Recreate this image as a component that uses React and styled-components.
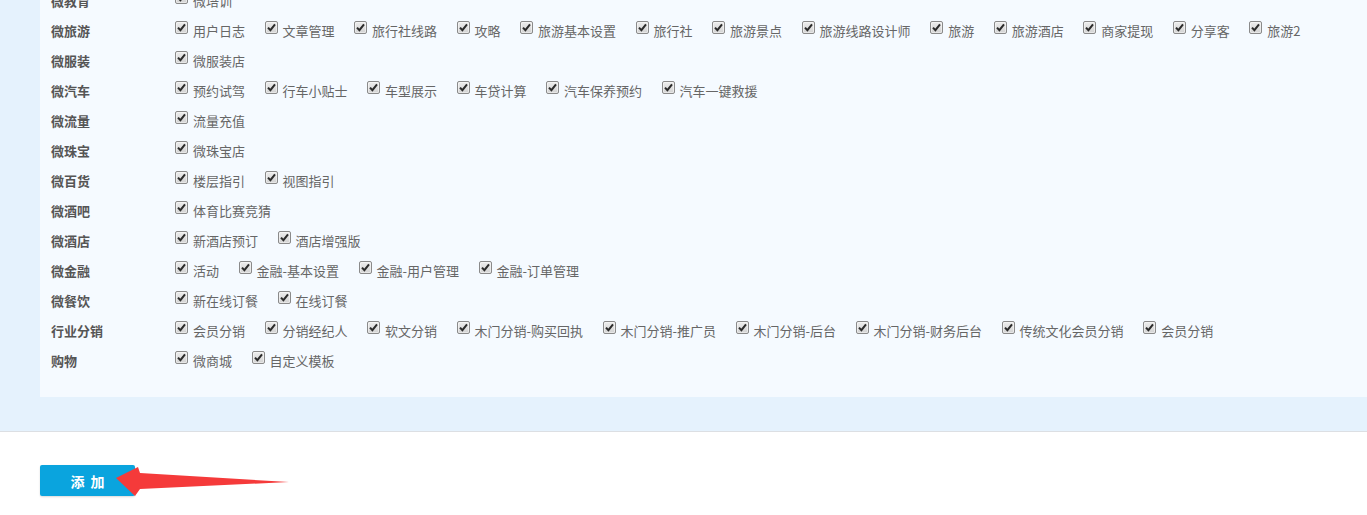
import React from 'react'
import styled, { createGlobalStyle } from 'styled-components'

const GlobalStyle = createGlobalStyle`
  html, body {
    margin: 0;
    padding: 0;
    background: #fff;
    overflow: hidden;
  }
  body {
    font-family: "Noto Sans CJK SC", "Liberation Sans", sans-serif;
    font-size: 13px;
    color: #666;
  }
`

const StyledPage = styled.div`
  position: relative;
  width: 1367px;
  height: 515px;
  overflow: hidden;
`

const StyledOuter = styled.div`
  margin-top: -15px;
  background-color: #e5f2fd;
  padding: 0 0 34px 40px;
  border-bottom: 1px solid #dcdfe3;
`

const StyledPanel = styled.div`
  background-color: #f5faff;
  padding-bottom: 22px;
`

const StyledRow = styled.div`
  display: flex;
  flex-direction: row;
  align-items: center;
  height: 30px;
`

const StyledGroup = styled.div`
  width: 124px;
  padding-left: 11px;
  font-weight: bold;
  color: #555;
  white-space: nowrap;
`

const StyledItems = styled.div`
  display: flex;
  flex-direction: row;
  align-items: center;
`

const StyledItem = styled.label`
  display: flex;
  flex-direction: row;
  align-items: center;
  margin-right: 19.5px;
  white-space: nowrap;
  color: #666;
`

const StyledBox = styled.span`
  display: inline-flex;
  align-items: center;
  justify-content: center;
  width: 11px;
  height: 11px;
  margin-top: -5px;
  margin-right: 5px;
  border: 1px solid #8a8a8a;
  border-radius: 2px;
  background: linear-gradient(#ededed, #d2d2d2);
  box-shadow: inset 0 0 0 1px rgba(255, 255, 255, 0.45);
`

const StyledFooter = styled.div`
  padding: 33px 0 0 40px;
`

const StyledButton = styled.button`
  width: 95px;
  height: 31px;
  padding: 0 0 0 6px;
  border: none;
  border-radius: 2px;
  background-color: #0aa4de;
  color: #fff;
  font-family: "Noto Sans CJK SC", sans-serif;
  font-size: 14px;
  font-weight: bold;
  letter-spacing: 6px;
  box-shadow: 0 1px 2px rgba(0, 0, 0, 0.15);
  cursor: pointer;
`

const StyledArrow = styled.svg`
  position: absolute;
  left: 0;
  top: 0;
  pointer-events: none;
`

const groups = [
  ['微教育', ['微培训']],
  ['微旅游', ['用户日志', '文章管理', '旅行社线路', '攻略', '旅游基本设置', '旅行社', '旅游景点', '旅游线路设计师', '旅游', '旅游酒店', '商家提现', '分享客', '旅游2']],
  ['微服装', ['微服装店']],
  ['微汽车', ['预约试驾', '行车小贴士', '车型展示', '车贷计算', '汽车保养预约', '汽车一键救援']],
  ['微流量', ['流量充值']],
  ['微珠宝', ['微珠宝店']],
  ['微百货', ['楼层指引', '视图指引']],
  ['微酒吧', ['体育比赛竞猜']],
  ['微酒店', ['新酒店预订', '酒店增强版']],
  ['微金融', ['活动', '金融-基本设置', '金融-用户管理', '金融-订单管理']],
  ['微餐饮', ['新在线订餐', '在线订餐']],
  ['行业分销', ['会员分销', '分销经纪人', '软文分销', '木门分销-购买回执', '木门分销-推广员', '木门分销-后台', '木门分销-财务后台', '传统文化会员分销', '会员分销']],
  ['购物', ['微商城', '自定义模板']]
]

const Check = () => (
  <StyledBox>
    <svg width='9' height='9' viewBox='0 0 9 9'>
      <path d='M1 4.6 L3.4 7.2 L8 1.4' fill='none' stroke='#2b2b2b' strokeWidth='2' />
    </svg>
  </StyledBox>
)

const App = () => (
  <StyledPage>
    <GlobalStyle />
    <StyledOuter>
      <StyledPanel>
        {groups.map(([name, items]) => (
          <StyledRow key={name}>
            <StyledGroup>{name}</StyledGroup>
            <StyledItems>
              {items.map((item, i) => (
                <StyledItem key={i}>
                  <Check />
                  {item}
                </StyledItem>
              ))}
            </StyledItems>
          </StyledRow>
        ))}
      </StyledPanel>
    </StyledOuter>
    <StyledFooter>
      <StyledButton>添加</StyledButton>
    </StyledFooter>
    {/* red annotation arrow pointing at the button */}
    <StyledArrow width='300' height='515' viewBox='0 0 300 515'>
      <polygon
        points='116,478 138,467 140,473 289,482 140,489 135,496'
        fill='#f53a3a'
      />
    </StyledArrow>
  </StyledPage>
)

export default App
